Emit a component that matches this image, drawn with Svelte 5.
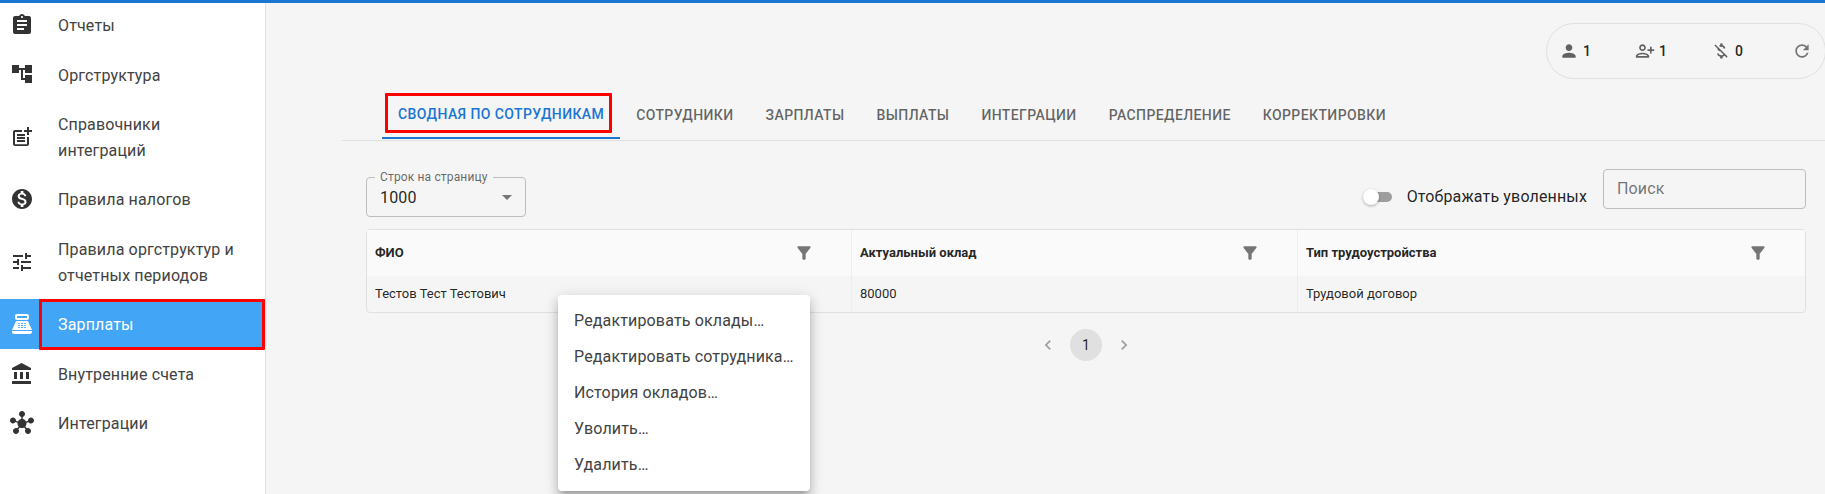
<script>
  const navItems = [
    { label: 'Отчеты', icon: 'M19 3h-4.18C14.4 1.84 13.3 1 12 1c-1.3 0-2.4.84-2.82 2H5c-1.1 0-2 .9-2 2v14c0 1.1.9 2 2 2h14c1.1 0 2-.9 2-2V5c0-1.1-.9-2-2-2zm-7 0c.55 0 1 .45 1 1s-.45 1-1 1-1-.45-1-1 .45-1 1-1zm2 14H7v-2h7v2zm3-4H7v-2h10v2zm0-4H7V7h10v2z' },
    { label: 'Оргструктура', icon: 'M22 11V3h-7v3H9V3H2v8h7V8h2v10h4v3h7v-8h-7v3h-2V8h2v3z' },
    { label: 'Справочники интеграций', icon: 'M17 19.22H5V7h7V5H5c-1.1 0-2 .9-2 2v12c0 1.1.9 2 2 2h12c1.1 0 2-.9 2-2v-7h-2v7.22z M19 2h-2v3h-3c.01.01 0 2 0 2h3v2.99c.01.01 2 0 2 0V7h3V5h-3V2z M7 9h8v2H7z M7 12v2h8v-2h-3z M7 15h8v2H7z' },
    { label: 'Правила налогов', icon: 'M12 2C6.48 2 2 6.48 2 12s4.48 10 10 10 10-4.48 10-10S17.52 2 12 2zm1.41 16.09V20h-2.67v-1.93c-1.71-.36-3.16-1.46-3.27-3.4h1.96c.1 1.05.82 1.87 2.65 1.87 1.96 0 2.4-.98 2.4-1.59 0-.83-.44-1.61-2.67-2.14-2.48-.6-4.18-1.62-4.18-3.67 0-1.72 1.39-2.84 3.11-3.21V4h2.67v1.95c1.86.45 2.79 1.86 2.85 3.39H14.3c-.05-1.11-.64-1.87-2.22-1.87-1.5 0-2.4.68-2.4 1.64 0 .84.65 1.39 2.67 1.91s4.18 1.39 4.18 3.91c-.01 1.83-1.38 2.83-3.12 3.16z' },
    { label: 'Правила оргструктур и отчетных периодов', icon: 'M3 17v2h6v-2H3zM3 5v2h10V5H3zm10 16v-2h8v-2h-8v-2h-2v6h2zM7 9v2H3v2h4v2h2V9H7zm14 4v-2H11v2h10zm-6-4h2V7h4V5h-4V3h-2v6z' },
    { label: 'Зарплаты', active: true, icon: 'M17 2H7c-1.1 0-2 .9-2 2v2c0 1.1.9 2 2 2h10c1.1 0 2-.9 2-2V4c0-1.1-.9-2-2-2zm0 4H7V4h10v2zm3 16H4c-1.1 0-2-.9-2-2v-1h20v1c0 1.1-.9 2-2 2zm-1.47-11.81C18.21 9.47 17.49 9 16.7 9H7.3c-.79 0-1.51.47-1.83 1.19L2 18h20l-3.47-7.81zM9.5 16h-1c-.28 0-.5-.22-.5-.5s.22-.5.5-.5h1c.28 0 .5.22.5.5s-.22.5-.5.5zm0-2h-1c-.28 0-.5-.22-.5-.5s.22-.5.5-.5h1c.28 0 .5.22.5.5s-.22.5-.5.5zm0-2h-1c-.28 0-.5-.22-.5-.5s.22-.5.5-.5h1c.28 0 .5.22.5.5s-.22.5-.5.5zm3 4h-1c-.28 0-.5-.22-.5-.5s.22-.5.5-.5h1c.28 0 .5.22.5.5s-.22.5-.5.5zm0-2h-1c-.28 0-.5-.22-.5-.5s.22-.5.5-.5h1c.28 0 .5.22.5.5s-.22.5-.5.5zm0-2h-1c-.28 0-.5-.22-.5-.5s.22-.5.5-.5h1c.28 0 .5.22.5.5s-.22.5-.5.5zm3 4h-1c-.28 0-.5-.22-.5-.5s.22-.5.5-.5h1c.28 0 .5.22.5.5s-.22.5-.5.5zm0-2h-1c-.28 0-.5-.22-.5-.5s.22-.5.5-.5h1c.28 0 .5.22.5.5s-.22.5-.5.5zm0-2h-1c-.28 0-.5-.22-.5-.5s.22-.5.5-.5h1c.28 0 .5.22.5.5s-.22.5-.5.5z' },
    { label: 'Внутренние счета', icon: 'M4 10v7h3v-7H4zm6 0v7h3v-7h-3zM2 22h19v-3H2v3zm14-12v7h3v-7h-3zm-4.5-9L2 6v2h19V6l-9.5-5z' },
    { label: 'Интеграции', icon: 'M8.4 18.2c.38.5.6 1.12.6 1.8 0 1.66-1.34 3-3 3s-3-1.34-3-3 1.34-3 3-3c.44 0 .85.09 1.23.26l1.41-1.77c-.92-1.03-1.29-2.39-1.09-3.69l-2.03-.68c-.54.83-1.46 1.38-2.52 1.38-1.66 0-3-1.34-3-3s1.34-3 3-3 3 1.34 3 3c0 .07 0 .14-.01.21l2.03.68c.64-1.21 1.82-2.09 3.22-2.32V5.91C9.96 5.57 9 4.4 9 3c0-1.66 1.34-3 3-3s3 1.34 3 3c0 1.4-.96 2.57-2.25 2.91v2.16c1.4.23 2.58 1.11 3.22 2.32l2.03-.68C18 9.64 18 9.57 18 9.5c0-1.66 1.34-3 3-3s3 1.34 3 3-1.34 3-3 3c-1.06 0-1.98-.55-2.52-1.37l-2.03.68c.2 1.29-.16 2.65-1.09 3.69l1.41 1.77c.38-.17.79-.26 1.23-.26 1.66 0 3 1.34 3 3s-1.34 3-3 3-3-1.34-3-3c0-.68.22-1.3.6-1.8l-1.41-1.77c-1.35.75-3.01.76-4.38 0L8.4 18.2z' }
  ];

  const tabs = ['Сводная по сотрудникам', 'Сотрудники', 'Зарплаты', 'Выплаты', 'Интеграции', 'Распределение', 'Корректировки'];
  const columns = ['ФИО', 'Актуальный оклад', 'Тип трудоустройства'];
  const row = ['Тестов Тест Тестович', '80000', 'Трудовой договор'];
  const menuItems = ['Редактировать оклады…', 'Редактировать сотрудника…', 'История окладов…', 'Уволить…', 'Удалить…'];

  const filterIcon = 'M4.25 5.61C6.27 8.2 10 13 10 13v6c0 .55.45 1 1 1h2c.55 0 1-.45 1-1v-6s3.72-4.8 5.74-7.39c.51-.66.04-1.61-.79-1.61H5.04c-.83 0-1.3.95-.79 1.61z';
</script>

<div class="page">
  <div class="topbar"></div>

  <nav class="sidebar">
    {#each navItems as item}
      <div class="nav-item" class:active={item.active}>
        <svg class="nav-icon" viewBox="0 0 24 24"><path d={item.icon} /></svg>
        <span class="nav-label">{item.label}</span>
        {#if item.active}<div class="mark nav-mark"></div>{/if}
      </div>
    {/each}
  </nav>

  <main class="main">
    <div class="status-row">
      <div class="status">
        <div class="stat">
          <svg viewBox="0 0 24 24"><path d="M12 12c2.21 0 4-1.79 4-4s-1.79-4-4-4-4 1.79-4 4 1.79 4 4 4zm0 2c-2.67 0-8 1.34-8 4v2h16v-2c0-2.66-5.33-4-8-4z" /></svg>
          <span>1</span>
        </div>
        <div class="stat">
          <svg class="flip" viewBox="0 0 24 24"><path d="M15 12c2.21 0 4-1.79 4-4s-1.79-4-4-4-4 1.79-4 4 1.79 4 4 4zm0-6c1.1 0 2 .9 2 2s-.9 2-2 2-2-.9-2-2 .9-2 2-2zm0 8c-2.67 0-8 1.34-8 4v2h16v-2c0-2.66-5.33-4-8-4zm-6 4c.22-.72 3.31-2 6-2 2.7 0 5.8 1.29 6 2H9zm-3-3v-3h3v-2H6V7H4v3H1v2h3v3h2z" /></svg>
          <span>1</span>
        </div>
        <div class="stat">
          <svg viewBox="0 0 24 24"><path d="M12.5 6.9c1.78 0 2.44.85 2.5 2.1h2.21c-.07-1.72-1.12-3.3-3.21-3.81V3h-3v2.16c-.53.12-1.03.3-1.48.54l1.47 1.47c.41-.17.91-.27 1.51-.27zM5.33 4.06 4.06 5.33 7.5 8.77c0 2.08 1.56 3.21 3.91 3.91l3.51 3.51c-.34.48-1.05.91-2.42.91-2.06 0-2.87-.92-2.98-2.1h-2.2c.12 2.19 1.76 3.42 3.68 3.83V21h3v-2.15c.96-.18 1.82-.55 2.45-1.12l2.22 2.22 1.27-1.27L5.33 4.06z" /></svg>
          <span>0</span>
        </div>
        <svg class="refresh" viewBox="0 0 24 24"><path d="M17.65 6.35C16.2 4.9 14.21 4 12 4c-4.42 0-7.99 3.58-7.99 8s3.57 8 7.99 8c3.73 0 6.84-2.55 7.73-6h-2.08c-.82 2.33-3.04 4-5.65 4-3.31 0-6-2.69-6-6s2.69-6 6-6c1.66 0 3.14.69 4.22 1.78L13 11h7V4l-2.35 2.35z" /></svg>
      </div>
    </div>

    <div class="tabs">
      {#each tabs as tab, i}
        <div class="tab" class:current={i === 0}>
          {tab}
          {#if i === 0}<div class="mark tab-mark"></div>{/if}
        </div>
      {/each}
    </div>

    <section class="content">
      <div class="toolbar">
        <fieldset class="select">
          <legend>Строк на страницу</legend>
          <span>1000</span>
          <svg class="caret" viewBox="0 0 24 24"><path d="M7 10l5 5 5-5z" /></svg>
        </fieldset>

        <div class="toolbar-right">
          <div class="switch"><div class="thumb"></div></div>
          <span class="switch-label">Отображать уволенных</span>
          <div class="search">Поиск</div>
        </div>
      </div>

      <div class="grid">
        {#each columns as col, i}
          <div class="head-cell" class:last={i === 2}>
            <span>{col}</span>
            <svg viewBox="0 0 24 24"><path d={filterIcon} /></svg>
          </div>
        {/each}
        {#each row as cell, i}
          <div class="cell" class:last={i === 2}>{cell}</div>
        {/each}
      </div>

      <div class="pager">
        <svg viewBox="0 0 24 24"><path d="M15.41 7.41 14 6l-6 6 6 6 1.41-1.41L10.83 12z" /></svg>
        <div class="page-num">1</div>
        <svg viewBox="0 0 24 24"><path d="M10 6 8.59 7.41 13.17 12l-4.58 4.59L10 18l6-6z" /></svg>
      </div>
    </section>
  </main>

  <div class="menu">
    {#each menuItems as item}
      <div class="menu-item">{item}</div>
    {/each}
  </div>
</div>

<style>
  :global(body) {
    margin: 0;
    background: #f5f5f5;
    overflow: hidden;
  }

  .page {
    position: relative;
    display: flex;
    width: 1825px;
    height: 494px;
    overflow: hidden;
    font-family: Roboto, "Liberation Sans", sans-serif;
    color: rgba(0, 0, 0, 0.87);
  }

  .topbar {
    position: absolute;
    top: 0;
    left: 0;
    right: 0;
    height: 3px;
    background: #1976d2;
    z-index: 5;
  }

  .sidebar {
    flex: 0 0 265px;
    background: #fff;
    border-right: 1px solid #e0e0e0;
  }

  .nav-item {
    position: relative;
    display: flex;
    align-items: center;
    padding: 13px 16px 11px 10px;
    font-size: 16px;
    line-height: 25.6px;
    letter-spacing: 0.00938em;
    color: #424242;
  }

  .nav-item.active {
    background: #42a5f5;
    color: #fff;
  }

  .nav-icon {
    flex: none;
    width: 24px;
    height: 24px;
    margin-top: -2px;
    margin-right: 24px;
    fill: #333;
  }

  .active .nav-icon {
    fill: #fff;
  }

  .nav-label {
    max-width: 185px;
  }

  .mark {
    position: absolute;
    box-sizing: border-box;
    border: 3px solid #f00;
    border-radius: 1px;
  }

  .nav-mark {
    left: 39px;
    right: 0;
    top: 0;
    bottom: -1px;
  }

  .main {
    flex: 1;
    min-width: 0;
    background: #f5f5f5;
    padding-top: 23px;
  }

  .status-row {
    display: flex;
    justify-content: flex-end;
    height: 68px;
    margin-right: -1px;
  }

  .status {
    display: flex;
    align-items: center;
    box-sizing: border-box;
    width: 280px;
    height: 56px;
    padding: 0 13px 0 12px;
    border: 1px solid #e0e0e0;
    border-radius: 28px;
  }

  .stat {
    display: flex;
    align-items: center;
    width: 76px;
    gap: 4px;
    font-size: 14px;
    font-weight: 500;
  }

  .stat svg {
    width: 20px;
    height: 20px;
    fill: #616161;
  }

  .flip {
    transform: scaleX(-1);
  }

  .refresh {
    width: 20px;
    height: 20px;
    margin-left: auto;
    fill: #757575;
  }

  .tabs {
    display: flex;
    height: 49px;
    margin-left: 76px;
    padding-left: 40px;
    border-bottom: 1px solid #e0e0e0;
  }

  .tab {
    position: relative;
    display: flex;
    align-items: center;
    height: 48px;
    box-sizing: border-box;
    padding: 0 16px;
    font-size: 14px;
    font-weight: 500;
    letter-spacing: 0.02857em;
    text-transform: uppercase;
    white-space: nowrap;
    color: rgba(0, 0, 0, 0.6);
  }

  .tab.current {
    color: #1976d2;
    border-bottom: 2px solid #1976d2;
  }

  .tab-mark {
    left: 3px;
    right: 8px;
    top: 2px;
    height: 40px;
  }

  .content {
    padding: 28px 19px 0 100px;
  }

  .toolbar {
    display: flex;
    justify-content: space-between;
    height: 60px;
  }

  .select {
    position: relative;
    box-sizing: border-box;
    width: 160px;
    height: 47px;
    margin: 1px 0 0;
    padding: 0 13px;
    border: 1px solid #bdbdbd;
    border-radius: 4px;
    font-size: 16px;
    line-height: 32px;
    letter-spacing: 0.00938em;
  }

  .select legend {
    padding: 0 5px;
    margin-left: -5px;
    font-size: 12px;
    line-height: 14px;
    color: rgba(0, 0, 0, 0.6);
  }

  .select span {
    display: block;
    margin-top: -2px;
  }

  .caret {
    position: absolute;
    right: 6px;
    top: 1px;
    width: 24px;
    height: 24px;
    fill: #757575;
  }

  .toolbar-right {
    display: flex;
    align-items: flex-start;
  }

  .switch {
    position: relative;
    width: 26px;
    height: 10px;
    margin: 23px 15px 0 0;
    border-radius: 5px;
    background: #9e9e9e;
  }

  .thumb {
    position: absolute;
    left: -3px;
    top: -3px;
    width: 16px;
    height: 16px;
    border-radius: 50%;
    background: #fff;
    box-shadow: 0 1px 3px rgba(0, 0, 0, 0.3);
  }

  .switch-label {
    margin-top: 18px;
    margin-right: 16px;
    font-size: 16px;
    line-height: 20px;
    letter-spacing: 0.00938em;
  }

  .search {
    box-sizing: border-box;
    width: 203px;
    height: 40px;
    padding: 0 13px;
    border: 1px solid #bdbdbd;
    border-radius: 4px;
    font-size: 16px;
    line-height: 38px;
    letter-spacing: 0.00938em;
    color: rgba(0, 0, 0, 0.55);
  }

  .grid {
    display: grid;
    grid-template-columns: 485px 446px 1fr;
    grid-template-rows: 46px 36px;
    border: 1px solid #e0e0e0;
    border-radius: 4px;
    font-size: 13px;
  }

  .head-cell {
    display: flex;
    align-items: center;
    justify-content: space-between;
    padding: 0 37px 1px 8px;
    background: #fafafa;
    border-right: 1px solid #eee;
    font-weight: 700;
  }

  .head-cell svg {
    width: 20px;
    height: 20px;
    fill: #757575;
  }

  .cell {
    display: flex;
    align-items: center;
    padding: 0 8px 1px;
    border-right: 1px solid #eee;
  }

  .last {
    border-right: none;
  }

  .pager {
    display: flex;
    align-items: center;
    justify-content: center;
    gap: 12px;
    height: 32px;
    margin-top: 16px;
  }

  .pager svg {
    width: 20px;
    height: 20px;
    fill: #9e9e9e;
  }

  .page-num {
    display: flex;
    align-items: center;
    justify-content: center;
    width: 32px;
    height: 32px;
    border-radius: 50%;
    background: #e0e0e0;
    font-size: 14px;
  }

  .menu {
    position: absolute;
    left: 558px;
    top: 295px;
    width: 252px;
    padding: 8px 0;
    background: #fff;
    border-radius: 4px;
    box-shadow: 0 5px 5px -3px rgba(0, 0, 0, 0.2), 0 8px 10px 1px rgba(0, 0, 0, 0.14), 0 3px 14px 2px rgba(0, 0, 0, 0.12);
  }

  .menu-item {
    height: 36px;
    padding: 0 16px;
    font-size: 16px;
    line-height: 36px;
    letter-spacing: 0.00938em;
    white-space: nowrap;
    color: #424242;
  }
</style>
